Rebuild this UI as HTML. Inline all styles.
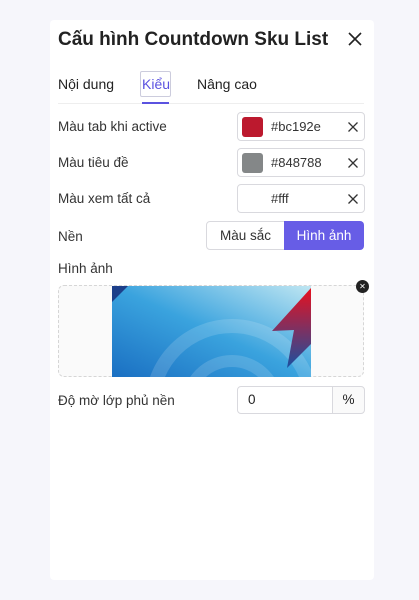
<!DOCTYPE html>
<html><head><style>
body{margin:0;width:419px;height:600px;background:#f6f6fb;font-family:"Liberation Sans","Noto Sans CJK SC",sans-serif;color:#222;position:relative;overflow:hidden}
.card{position:absolute;left:50px;top:20px;width:324px;height:560px;background:#fff;border-radius:4px}
.a{position:absolute}
.lbl{position:absolute;left:58px;font-size:13.5px;color:#333}
.inp{position:absolute;left:237px;width:126px;height:27px;border:1px solid #d9d9de;border-radius:4px;background:#fff}
.sw{position:absolute;left:4px;top:4px;width:21px;height:20px;border-radius:3px}
.hx{position:absolute;left:33px;top:6px;font-size:13px;color:#333}
.x{position:absolute;right:6px;top:9px}
</style></head><body>
<div class="card"></div>
<div class="a" style="left:58px;top:29px;font-size:19px;font-weight:bold;color:#222">Cấu hình Countdown Sku List</div>
<svg class="a" style="left:348px;top:32px" width="14" height="14"><path d="M1 1L13 13M13 1L1 13" stroke="#222" stroke-width="1.6"/></svg>
<div class="a" style="left:58px;top:76px;font-size:14px">Nội dung</div>
<div class="a" style="left:140px;top:71px;width:29px;height:24px;border:1px solid #ccd;border-radius:2px"></div>
<div class="a" style="left:142px;top:76px;font-size:14px;color:#5b52e0">Kiểu</div>
<div class="a" style="left:197px;top:76px;font-size:14px">Nâng cao</div>
<div class="a" style="left:58px;top:103px;width:306px;height:1px;background:#eee"></div>
<div class="a" style="left:142px;top:102px;width:27px;height:2px;background:#5b52e0"></div>

<div class="lbl" style="top:119px">Màu tab khi active</div>
<div class="inp" style="top:112px"><div class="sw" style="background:#bc192e"></div><div class="hx">#bc192e</div><svg class="x" width="10" height="10"><path d="M.5 .5L9.5 9.5M9.5 .5L.5 9.5" stroke="#333" stroke-width="1.3"/></svg></div>
<div class="lbl" style="top:155px">Màu tiêu đề</div>
<div class="inp" style="top:148px"><div class="sw" style="background:#848788"></div><div class="hx">#848788</div><svg class="x" width="10" height="10"><path d="M.5 .5L9.5 9.5M9.5 .5L.5 9.5" stroke="#333" stroke-width="1.3"/></svg></div>
<div class="lbl" style="top:191px">Màu xem tất cả</div>
<div class="inp" style="top:184px"><div class="hx">#fff</div><svg class="x" width="10" height="10"><path d="M.5 .5L9.5 9.5M9.5 .5L.5 9.5" stroke="#333" stroke-width="1.3"/></svg></div>

<div class="lbl" style="top:229px">Nền</div>
<div class="a" style="left:206px;top:221px;width:77px;height:27px;border:1px solid #d9d9de;border-radius:4px 0 0 4px;font-size:13.5px;text-align:center;line-height:27px;color:#333">Màu sắc</div>
<div class="a" style="left:284px;top:221px;width:80px;height:29px;background:#675de6;border-radius:0 4px 4px 0;font-size:13.5px;text-align:center;line-height:29px;color:#fff">Hình ảnh</div>

<div class="lbl" style="top:261px">Hình ảnh</div>
<div class="a" style="left:58px;top:285px;width:304px;height:90px;border:1px dashed #d6d6d6;border-radius:6px;background:#fafafa"></div>
<svg class="a" style="left:112px;top:286px" width="199" height="91">
<defs><linearGradient id="g" x1="0" y1="1" x2="1" y2="0"><stop offset="0" stop-color="#1a6fc2"/><stop offset=".5" stop-color="#3aa3de"/><stop offset="1" stop-color="#bfe6f2"/></linearGradient>
<linearGradient id="r" x1="0" y1="0" x2="0" y2="1"><stop offset="0" stop-color="#e8101e"/><stop offset="1" stop-color="#1a4fa0"/></linearGradient></defs>
<rect width="199" height="91" fill="url(#g)"/>
<circle cx="120" cy="120" r="80" fill="none" stroke="#fff" stroke-opacity=".15" stroke-width="14"/>
<circle cx="120" cy="120" r="45" fill="none" stroke="#fff" stroke-opacity=".15" stroke-width="12"/>
<path d="M0 0H16L0 16Z" fill="#1c3f8a"/>
<path d="M199 2L160 45L182 44L175 82L199 58Z" fill="url(#r)"/>
</svg>
<div class="a" style="left:356px;top:280px;width:13px;height:13px;border-radius:50%;background:#222;color:#fff;font-size:8px;text-align:center;line-height:13px">✕</div>

<div class="lbl" style="top:393px">Độ mờ lớp phủ nền</div>
<div class="a" style="left:237px;top:386px;height:26px;border:1px solid #d9d9de;border-radius:4px 0 0 4px;font-size:13.5px;line-height:26px;padding-left:10px;width:84px">0</div>
<div class="a" style="left:332px;top:386px;width:31px;height:26px;border:1px solid #d9d9de;border-radius:0 4px 4px 0;background:#fafafa;font-size:13.5px;line-height:26px;text-align:center">%</div>
</body></html>
